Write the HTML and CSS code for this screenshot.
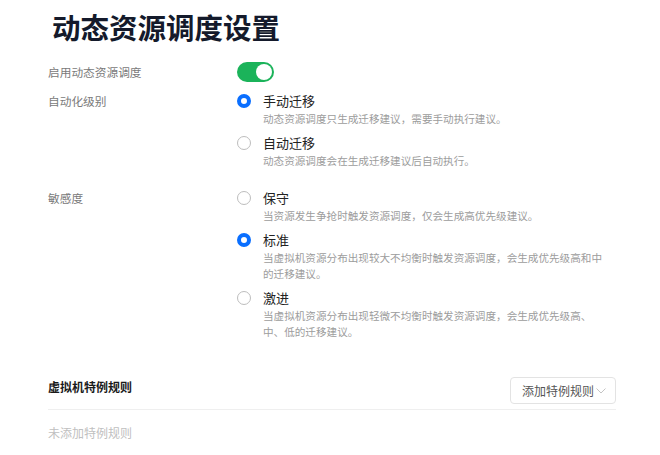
FILE: index.html
```html
<!DOCTYPE html>
<html lang="zh">
<head>
<meta charset="utf-8">
<title>动态资源调度设置</title>
<link rel="stylesheet" href="styles.css">
</head>
<body>
<div class="page">
  <h1 class="title">动态资源调度设置</h1>

  <div class="row row-toggle">
    <div class="label">启用动态资源调度</div>
    <div class="field">
      <span class="switch on"><span class="knob"></span></span>
    </div>
  </div>

  <div class="row row-auto">
    <div class="label">自动化级别</div>
    <div class="field">
      <div class="option">
        <span class="radio checked"></span>
        <div class="opt-body">
          <div class="opt-title">手动迁移</div>
          <div class="opt-desc">动态资源调度只生成迁移建议，需要手动执行建议。</div>
        </div>
      </div>
      <div class="option">
        <span class="radio"></span>
        <div class="opt-body">
          <div class="opt-title">自动迁移</div>
          <div class="opt-desc">动态资源调度会在生成迁移建议后自动执行。</div>
        </div>
      </div>
    </div>
  </div>

  <div class="row row-sens">
    <div class="label">敏感度</div>
    <div class="field">
      <div class="option">
        <span class="radio"></span>
        <div class="opt-body">
          <div class="opt-title">保守</div>
          <div class="opt-desc">当资源发生争抢时触发资源调度，仅会生成高优先级建议。</div>
        </div>
      </div>
      <div class="option">
        <span class="radio checked"></span>
        <div class="opt-body">
          <div class="opt-title">标准</div>
          <div class="opt-desc">当虚拟机资源分布出现较大不均衡时触发资源调度，会生成优先级高和中的迁移建议。</div>
        </div>
      </div>
      <div class="option">
        <span class="radio"></span>
        <div class="opt-body">
          <div class="opt-title">激进</div>
          <div class="opt-desc">当虚拟机资源分布出现轻微不均衡时触发资源调度，会生成优先级高、中、低的迁移建议。</div>
        </div>
      </div>
    </div>
  </div>

  <div class="section">
    <div class="section-head">
      <div class="section-title">虚拟机特例规则</div>
      <button class="dropdown" type="button">添加特例规则
        <svg class="chev" width="10" height="6" viewBox="0 0 10 6"><path d="M0.5 0.5 L5 5 L9.5 0.5" fill="none" stroke="#c4c4c4" stroke-width="1"/></svg>
      </button>
    </div>
    <div class="empty">未添加特例规则</div>
  </div>
</div>
</body>
</html>
```

FILE: styles.css
```css
* { box-sizing: border-box; }
html, body {
  margin: 0;
  background: #ffffff;
}
body {
  font-family: "Noto Sans CJK SC", "Microsoft YaHei", "Noto Sans", sans-serif;
  color: #222;
}
.page {
  width: 616px;
  padding: 9px 0 0 48px;
}
.title {
  margin: 0 0 0 4px;
  font-size: 28.5px;
  line-height: 36px;
  font-weight: 700;
  color: #141a2b;
}
.row {
  display: flex;
  align-items: flex-start;
}
.row-toggle { margin-top: 17px; }
.row-auto { margin-top: 9px; }
.row-sens { margin-top: 19px; }
.label {
  width: 189px;
  flex: none;
  font-size: 11.7px;
  line-height: 20px;
  color: #7a7a7a;
}
.field {
  flex: 1;
  display: flex;
  flex-direction: column;
  gap: 6px;
}
.switch {
  display: block;
  width: 37px;
  height: 20px;
  border-radius: 10px;
  background: #e0e0e0;
  position: relative;
}
.switch.on { background: #1bb35a; }
.switch .knob {
  position: absolute;
  top: 2px;
  left: 2px;
  width: 16px;
  height: 16px;
  border-radius: 50%;
  background: #fff;
}
.switch.on .knob { left: 19px; }
.option {
  display: flex;
  align-items: flex-start;
}
.radio {
  flex: none;
  width: 14px;
  height: 14px;
  margin-top: 3px;
  margin-right: 12px;
  border-radius: 50%;
  border: 1px solid #bdbdbd;
  background: #fff;
}
.radio.checked {
  border: 4px solid #0a6fff;
}
.opt-body { flex: 1; }
.opt-title {
  font-size: 13px;
  line-height: 20px;
  color: #222;
}
.opt-desc {
  font-size: 10.6px;
  line-height: 16px;
  color: #9c9c9c;
  max-width: 345px;
}
.section { margin-top: 37px; }
.section-head {
  display: flex;
  justify-content: space-between;
  align-items: flex-start;
  padding-bottom: 5px;
  border-bottom: 1px solid #efefef;
}
.section-title {
  font-size: 12px;
  line-height: 20px;
  font-weight: 700;
  color: #1a1a1a;
}
.dropdown {
  display: flex;
  align-items: center;
  height: 27px;
  width: 106px;
  padding: 0 9px 0 11px;
  border: 1px solid #e3e3e3;
  border-radius: 4px;
  background: #fff;
  font-family: inherit;
  font-size: 12px;
  color: #555;
  justify-content: space-between;
}
.chev { display: block; }
.empty {
  margin-top: 13px;
  font-size: 12px;
  line-height: 20px;
  color: #c0c0c0;
}
```
